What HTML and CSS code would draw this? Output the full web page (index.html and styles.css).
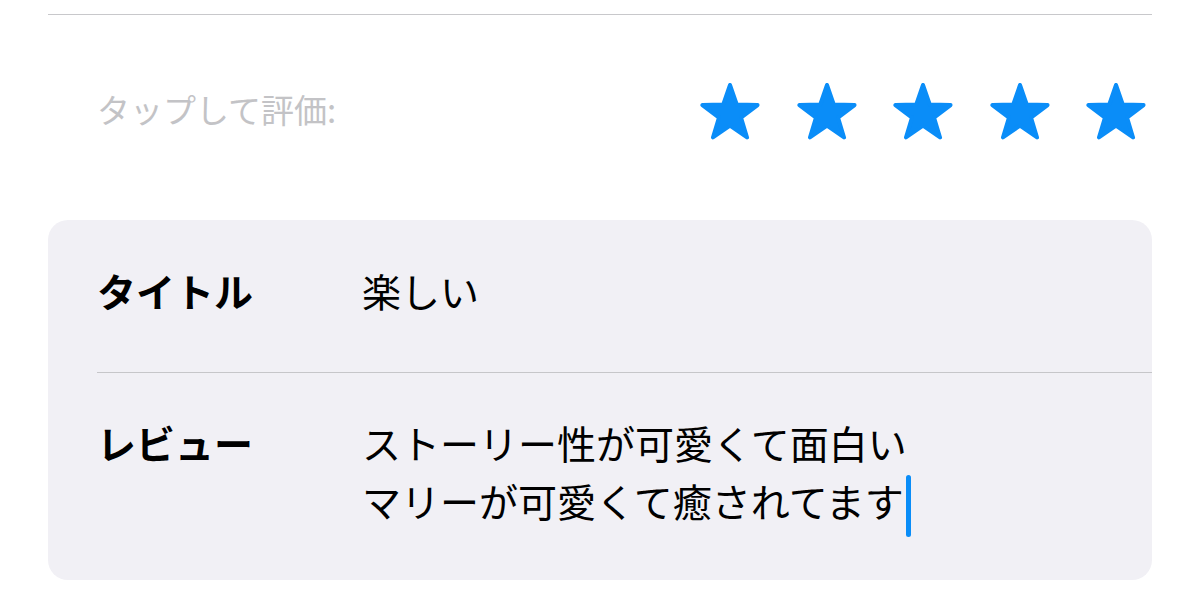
FILE: index.html
```html
<!DOCTYPE html>
<html lang="ja">
<head>
  <meta charset="UTF-8" />
  <meta name="viewport" content="width=device-width, initial-scale=1" />
  <title>レビューを書く</title>
  <link rel="stylesheet" href="styles.css">
</head>
<body>
  <div class="screen">
    <div class="rate-row">
      <span class="rate-label">タップして評価:</span>
      <div class="stars">
        <svg class="star" viewBox="0 0 64 60"><polygon points="32,2 38.82,21.62 59.58,22.04 43.03,34.58 49.05,54.46 32,42.6 14.95,54.46 20.97,34.58 4.42,22.04 25.18,21.62"/></svg>
        <svg class="star" viewBox="0 0 64 60"><polygon points="32,2 38.82,21.62 59.58,22.04 43.03,34.58 49.05,54.46 32,42.6 14.95,54.46 20.97,34.58 4.42,22.04 25.18,21.62"/></svg>
        <svg class="star" viewBox="0 0 64 60"><polygon points="32,2 38.82,21.62 59.58,22.04 43.03,34.58 49.05,54.46 32,42.6 14.95,54.46 20.97,34.58 4.42,22.04 25.18,21.62"/></svg>
        <svg class="star" viewBox="0 0 64 60"><polygon points="32,2 38.82,21.62 59.58,22.04 43.03,34.58 49.05,54.46 32,42.6 14.95,54.46 20.97,34.58 4.42,22.04 25.18,21.62"/></svg>
        <svg class="star" viewBox="0 0 64 60"><polygon points="32,2 38.82,21.62 59.58,22.04 43.03,34.58 49.05,54.46 32,42.6 14.95,54.46 20.97,34.58 4.42,22.04 25.18,21.62"/></svg>
      </div>
    </div>

    <div class="card">
      <div class="field">
        <div class="field-label">タイトル</div>
        <div class="field-value">楽しい</div>
      </div>
      <div class="field">
        <div class="field-label">レビュー</div>
        <div class="field-value">ストーリー性が可愛くて面白い<br>マリーが可愛くて癒されてます<span class="caret"></span></div>
      </div>
    </div>
  </div>
</body>
</html>
```

FILE: styles.css
```css
body {
  margin: 0;
  padding: 0;
  background: #fff;
  font-family: "Noto Sans CJK JP", "Noto Sans", sans-serif;
  color: #000;
}
.screen {
  padding: 14px 48px 0;
}
.rate-row {
  border-top: 1px solid #c8c8cb;
  height: 196px;
  display: flex;
  align-items: center;
  justify-content: space-between;
}
.rate-label {
  padding-left: 49px;
  margin-bottom: 8px;
  font-size: 33px;
  color: #c3c3c6;
}
.stars {
  display: flex;
  gap: 32.5px;
  padding-right: 4px;
}
.star {
  width: 64px;
  height: 60px;
  fill: #0a8df8;
  stroke: #0a8df8;
  stroke-width: 4;
  stroke-linejoin: round;
}
.card {
  margin-top: 9px;
  background: #f1f0f5;
  border-radius: 20px;
  padding-left: 49px;
}
.field {
  display: flex;
  font-size: 39px;
  line-height: 58px;
  padding: 40px 0 51px;
}
.field:first-child {
  padding: 41px 0 53px;
  border-bottom: 1px solid #c6c6c9;
}
.field-label {
  width: 265px;
  flex-shrink: 0;
  font-weight: bold;
}
.caret {
  display: inline-block;
  width: 5px;
  height: 62px;
  margin: 0 0 -10px 2px;
  vertical-align: -10px;
  background: #0a8df8;
  border-radius: 3px;
}
```
